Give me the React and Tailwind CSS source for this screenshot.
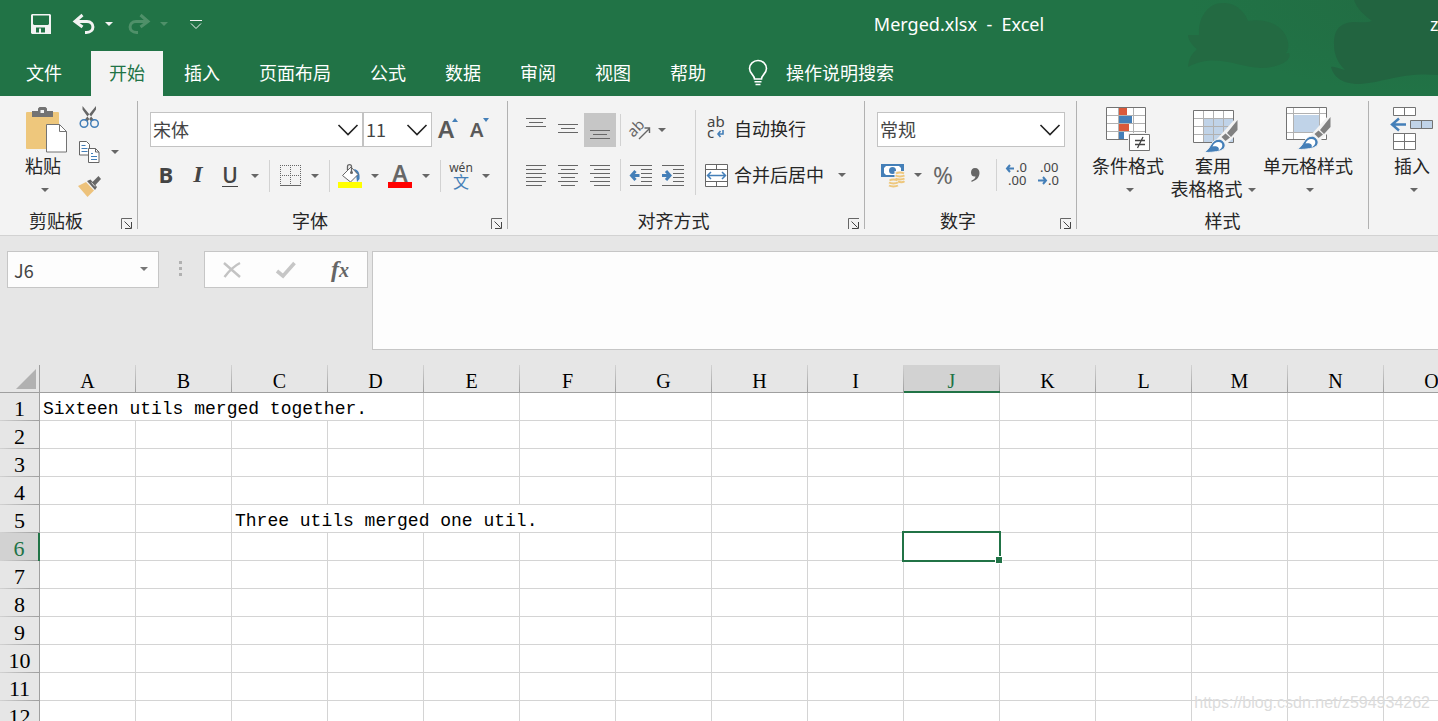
import React, { useState } from 'react';

const TABS = ['插入', '页面布局', '公式', '数据', '审阅', '视图', '帮助'];
const COLUMNS = 'ABCDEFGHIJKLMNO'.split('');
const ROWS = Array.from({ length: 12 }, (_, i) => i + 1);

// merged ranges, keyed by their first cell
const MERGED = {
  A1: { span: 4, text: 'Sixteen utils merged together.' },
  C5: { span: 4, text: 'Three utils merged one util.' },
};

const Svg = ({ w, h, className = '', children }) => (
  <svg width={w} height={h} viewBox={`0 0 ${w} ${h}`} fill="none" className={`shrink-0 overflow-visible ${className}`} aria-hidden="true">
    {children}
  </svg>
);

const Caret = ({ className = 'text-[#666666]' }) => (
  <Svg w={8} h={4} className={className}>
    <path d="M0 0h8L4 4z" fill="currentColor" />
  </Svg>
);

const CaretButton = ({ label, className = '' }) => (
  <button type="button" aria-label={label} className={`flex h-8 w-[10px] shrink-0 items-center justify-center ${className}`}>
    <Caret />
  </button>
);

const IconButton = ({ label, className = 'h-8 w-8', children }) => (
  <button type="button" aria-label={label} className={`flex shrink-0 items-center justify-center ${className}`}>
    {children}
  </button>
);

const Divider = ({ className = '' }) => <div className={`h-8 w-px shrink-0 bg-[#d2d2d2] ${className}`} />;

const Launcher = () => (
  <Svg w={11} h={11}>
    <path d="M.5 11V.5H11" stroke="#666" />
    <path d="M3.5 3.5l6 6M10.5 4v6.500H4" stroke="#444" />
  </Svg>
);

function Group({ label, launcher = true, className = '', children }) {
  return (
    <>
      <section aria-label={label} className={`flex shrink-0 flex-col ${className}`}>
        <div className="h-[113px]">{children}</div>
        <div className="flex h-6 items-center">
          <span className="flex-1 text-center">{label}</span>
          {launcher && (
            <IconButton label={`${label}设置`} className="h-6 w-[25px] pt-1 pl-[3px]">
              <Launcher />
            </IconButton>
          )}
        </div>
      </section>
      <div className="mt-[5px] mb-[6px] w-px shrink-0 bg-[#b1b1b1]" />
    </>
  );
}

function Select({ label, value, className = '' }) {
  return (
    <div className={`relative h-[35px] ${className}`}>
      <select
        aria-label={label}
        defaultValue={value}
        className="h-full w-full appearance-none border border-[#c3c3c3] bg-white pb-[2px] pl-[2px] font-['Noto_Sans_CJK_SC'] text-[#444444] outline-none"
      >
        <option>{value}</option>
      </select>
      <Svg w={22} h={12} className="pointer-events-none absolute top-3 right-1">
        <path d="M1.500 1l9.500 9.500L20.500 1" stroke="#222" strokeWidth="1.600" />
      </Svg>
    </div>
  );
}

const SaveIcon = () => (
  <Svg w={20} h={20}>
    <path fillRule="evenodd" clipRule="evenodd" fill="#f3f3f3" d="M1 0h18l1 1v19H1L0 19V1zM2 1.500v8.500l1 1h14l1-1V1.500zM5 13.500V18.500h3v-4h2v4h4v-5z" />
  </Svg>
);

const UndoIcon = ({ className = '' }) => (
  <Svg w={22} h={20} className={className}>
    <path d="M9.500 1L2 7.500l7.500 5.500M2.500 7.500H14c8 0 8 11-.5 11h-1.500" stroke="currentColor" strokeWidth="3" />
  </Svg>
);

const CustomizeIcon = () => (
  <Svg w={12} h={9}>
    <path d="M0 .5h12M1 3.500l5 5 5-5" stroke="#f3f3f3" />
  </Svg>
);

const BulbIcon = () => (
  <Svg w={20} h={26}>
    <path d="M6.500 19c0-4-5-5.500-5-10.500a8.500 8 0 0117 0c0 5-5 6.500-5 10.500z" stroke="#fff" strokeWidth="1.600" />
    <path d="M6.500 21.800h7M7.500 24.500h5" stroke="#fff" strokeWidth="1.600" />
  </Svg>
);

const PasteIcon = () => (
  <Svg w={43} h={46}>
    <rect x="1" y="5" width="33" height="37" rx="1" fill="#eec77c" />
    <path d="M7 10V4h6V1.500L14.500 0h6L22 1.500V4h6v6z" fill="#737373" />
    <rect x="15.500" y="3" width="3.500" height="3" fill="#f3f3f3" />
    <path d="M21.500 17.500h13l7 7V45h-20z" fill="#fff" stroke="#737373" />
    <path d="M34.500 17.500v7h7" stroke="#737373" />
  </Svg>
);

const CutIcon = () => (
  <Svg w={21} h={22}>
    <path d="M3.500 0l11.500 14-3 1.500L3.500 3.500zM17 0L5.500 14l3 1.500L17 3.500z" fill="#666" />
    <circle cx="5" cy="17.500" r="3.800" stroke="#447fb8" strokeWidth="1.500" />
    <circle cx="15.500" cy="17.500" r="3.800" stroke="#447fb8" strokeWidth="1.500" />
  </Svg>
);

const CopyIcon = () => (
  <Svg w={21} h={22}>
    <path d="M.5.5h7l3 3v10.500H.5z" fill="#fff" stroke="#666" />
    <path d="M2.500 4.500h4M2.500 7.500h6M2.500 10.500h6" stroke="#447fb8" />
    <path d="M9.500 7.500h7l3.500 3.500v10.500H9.500z" fill="#fff" stroke="#666" />
    <path d="M16.500 7.500V11H20" stroke="#666" />
    <path d="M12 12.500h2M12 15.500h6M12 18.500h6" stroke="#447fb8" />
  </Svg>
);

const BrushIcon = () => (
  <Svg w={23} h={21}>
    <path d="M8 6l8 8.500L9.500 21 0 10z" fill="#edc27b" />
    <path d="M9 5l3.500-1.500 6.500 7.500-2 3z" fill="#666" />
    <path d="M14 6.500L20.500 0l2.500 3-6 6.500z" fill="#666" />
    <path d="M13.500 6.500l3.500 4" stroke="#f3f3f3" strokeWidth=".8" />
  </Svg>
);

const BorderIcon = () => (
  <Svg w={21} h={22}>
    <path d="M0 .5h21M0 10.500h21M.5 0v20M10.500 0v20M20.500 0v20" stroke="#666" strokeDasharray="1 1" />
    <path d="M0 20.500h21" stroke="#666" />
  </Svg>
);

const FillIcon = () => (
  <Svg w={24} h={24}>
    <path d="M16 5c5 1 6 5 5.500 10l-2.500 3-1-8z" fill="#447fb8" />
    <path d="M4.500 11.500L13 3l7 7.500-7.500 7.500z" fill="#fff" stroke="#666" />
    <path d="M9.500 6V2.500c0-2.500 4-2.500 4 0V9" stroke="#666" strokeWidth="1.300" />
    <circle cx="13.500" cy="8.500" r="1.500" fill="#666" />
    <path d="M0 18h24v6H0z" fill="#ffff00" />
  </Svg>
);

// three-line vertical alignment icons; y is the first line
const VAlignIcon = ({ y }) => (
  <Svg w={20} h={34}>
    <path d={`M0 ${y}.5h20M3 ${y + 4}.5h14M0 ${y + 8}.5h20`} stroke="#666" />
  </Svg>
);

const ALIGN_PATHS = {
  left: 'M0 .5h20M0 4.500h16M0 8.500h20M0 12.500h16M0 16.500h20M0 20.500h16',
  center: 'M0 .5h20M3 4.500h14M0 8.500h20M3 12.500h14M0 16.500h20M3 20.500h14',
  right: 'M0 .5h20M4 4.500h16M0 8.500h20M4 12.500h16M0 16.500h20M4 20.500h16',
};

const AlignIcon = ({ kind }) => (
  <Svg w={20} h={21}>
    <path d={ALIGN_PATHS[kind]} stroke="#666" />
  </Svg>
);

const IndentIcon = ({ out }) => (
  <Svg w={22} h={21}>
    <path d="M0 .5h22M11 4.500h11M11 8.500h11M11 12.500h11M11 16.500h11M0 20.500h22" stroke="#666" />
    <path d={out ? 'M5.500 6L1.500 10.500l4 4.500M1.500 10.500h8' : 'M4 6l4 4.500-4 4.500M8 10.500H0'} stroke="#447fb8" strokeWidth="3" />
  </Svg>
);

const OrientationIcon = () => (
  <Svg w={22} h={20}>
    <text x="-1" y="14" transform="rotate(-45 6 11)" fontSize="15" fontFamily="Noto Sans" fill="#666">ab</text>
    <path d="M9 19L19.500 8.500M14.500 8h5v5" stroke="#666" strokeWidth="1.400" />
  </Svg>
);

const WrapIcon = () => (
  <Svg w={18} h={22}>
    <text x="0" y="9" fontSize="15" fontFamily="Noto Sans" fill="#444">ab</text>
    <text x="0" y="20" fontSize="15" fontFamily="Noto Sans" fill="#444">c</text>
    <path d="M16 12v4h-5M13.500 13L11 16l2.500 3" stroke="#447fb8" strokeWidth="1.600" />
  </Svg>
);

const MergeIcon = () => (
  <Svg w={23} h={23}>
    <path d="M.5.5h22v22H.5z" fill="#fff" stroke="#666" />
    <path d="M1 5.500h21M1 17.500h21M11.500 1v4M11.500 18v4" stroke="#666" />
    <path d="M2 11.500h19M6 8l-3.500 3.500L6 15M17 8l3.500 3.500L17 15" stroke="#447fb8" strokeWidth="1.500" />
  </Svg>
);

const MoneyIcon = () => (
  <Svg w={24} h={24}>
    <path d="M0 1h23v13H0z" fill="#447fb8" />
    <path d="M5 3h13l2 2v5l-2 2H5l-2-2V5z" fill="#fff" />
    <circle cx="11.500" cy="7.500" r="3.500" fill="#447fb8" />
    <path d="M13.500 8H24v11h-7v5H7v-9h6.500z" fill="#f3f3f3" />
    <g stroke="#eec77c" strokeWidth="2">
      <path d="M15 10.500c2-1.300 6-1.300 8 0M14.500 12.500c2 1.300 7 1.300 9 0M14.500 15.500c2 1.300 7 1.300 9 0M17 18.500c2 .8 5 .8 6.500-.3" />
      <path d="M8.500 17.500c2-1.200 6-1.200 8 0M8 19.500c2 1.300 7 1.300 9 0M8 22.500c2 1.300 7 1.300 9 0" />
    </g>
  </Svg>
);

const DecimalIcon = ({ more }) => (
  <Svg w={24} h={24}>
    <g fontFamily="Noto Sans" fontSize="13" fill="#444">
      <text x={more ? 11 : 3} y="9">{more ? '.0' : '.00'}</text>
      <text x={more ? 3 : 11} y="22">{more ? '.00' : '.0'}</text>
    </g>
    <path d={more ? 'M5 2L2 5.500 5 9M2 5.500h7' : 'M6 14l3 3.500L6 21M9 17.500H1'} stroke="#447fb8" strokeWidth="2" />
  </Svg>
);

// paint brush lying over the bottom right corner of a grid icon
const BrushOverlay = () => (
  <>
    <path d="M24 29L42 9h3v14L31 37z" fill="#f3f3f3" />
    <path d="M44.500 10v10L38 27l-4-4z" fill="#808080" />
    <path d="M32.500 23.500l4.500 4-4.500 3.500-4-4z" fill="#808080" />
    <path d="M10 42.500c6-2 6-6 10-10.500 3-3 7-4 10-1s3 7-1 9-11 2.500-19 2.500z" fill="#447fb8" stroke="#f3f3f3" />
    <path d="M19.500 36.500c1-4 6-6 9-3.500 2 3 0 6-3 7.500 1-2 0-5-6-4z" fill="#fff" />
  </>
);

const ConditionalIcon = () => (
  <Svg w={44} h={45}>
    <path d="M.5.5h39v32H.5z" fill="#fff" />
    <path d="M1 8.500h38M1 16.500h38M1 24.500h38M12.500 1v31M27.500 1v31" stroke="#b1b1b1" />
    <path d="M.5.5h39v32H.5z" stroke="#737373" />
    <path d="M13 1h8v7h-8zM13 17h10v7H13z" fill="#d9593a" />
    <path d="M13 9h13v7H13zM13 25h5v7h-5z" fill="#447fb8" />
    <path d="M22 26h22v19H22z" fill="#f3f3f3" />
    <path d="M23.500 27.500h20v16h-20z" fill="#fff" stroke="#737373" />
    <path d="M29 33.500h10M29 37.500h10M37 30l-5.500 11" stroke="#444" strokeWidth="1.300" />
  </Svg>
);

const TableFormatIcon = () => (
  <Svg w={44} h={45} className="mt-[3px] ml-1">
    <path d="M.5.5h40v32H.5z" fill="#fff" />
    <path d="M11 9h29v23H11z" fill="#c0d3e8" />
    <path d="M1 8.500h39M1 16.500h39M1 24.500h39M10.500 1v31M20.500 1v31M30.500 1v31" stroke="#b1b1b1" />
    <path d="M.5.5h40v32H.5z" stroke="#737373" />
    <BrushOverlay />
  </Svg>
);

const CellStyleIcon = () => (
  <Svg w={44} h={45}>
    <path d="M.5.5h40v32H.5z" fill="#fff" />
    <path d="M1 6.500h39M1 25.500h39M7.500 1v31M33.500 1v31" stroke="#b1b1b1" />
    <path d="M8 8h25v17H8z" fill="#c0d3e8" />
    <path d="M.5.5h40v32H.5z" stroke="#737373" />
    <BrushOverlay />
  </Svg>
);

const InsertIcon = () => (
  <Svg w={44} h={45}>
    <path d="M3.500.5h22v8h-22zM3.500 26.500h22v16h-22z" fill="#fff" stroke="#737373" />
    <path d="M14.500 1v7M14.500 27v15M4 34.500h21" stroke="#737373" />
    <path d="M20.500 13.500h22v8h-22z" fill="#c0d3e8" stroke="#737373" />
    <path d="M31.500 14v7" stroke="#737373" />
    <path d="M9 11.500L2 17.500l7 6M2 17.500h14" stroke="#447fb8" strokeWidth="2.400" />
  </Svg>
);

function BigButton({ icon, lines, className = '' }) {
  const last = lines.length - 1;
  return (
    <button type="button" className={`flex shrink-0 flex-col items-center pt-[11px] leading-[23px] ${className}`}>
      <span className="h-12">{icon}</span>
      {lines.map((line, i) => (
        <span key={line} className="flex items-center gap-[5px] whitespace-nowrap">
          {line}
          {i === last && last > 0 && <Caret />}
        </span>
      ))}
      {last === 0 && <span className="flex h-6 items-center pl-1"><Caret /></span>}
    </button>
  );
}

function TitleBar() {
  return (
    <header className="relative bg-[#217346] text-white">
      {/* office background art */}
      <svg width="290" height="96" viewBox="0 0 290 96" className="absolute top-0 right-0" aria-hidden="true">
        <defs>
          <radialGradient id="haze">
            <stop offset="0" stopColor="#22643f" stopOpacity=".5" />
            <stop offset="1" stopColor="#22643f" stopOpacity="0" />
          </radialGradient>
        </defs>
        <ellipse cx="290" cy="0" rx="250" ry="95" fill="url(#haze)" />
        <path d="M51 35C50 15 62 2 76 3c13 0 22 11 24 18 14-3 32 2 38 15 6 14 0 20-12 23h-14c12 0 20-5 29-6 4 9-14 15-28 15-22 0-45-16-73-1 1-9 3-12 9-18-3-2-9-8-9-14z" fill="#236a42" />
        <path d="M206 0h84v75c-36-3-56 8-79 9-19 0-26-9-28-17 4-1 8 2 14 3-8-8-11-16-11-26 0-15 6-21 20-22 6 0 14 1 18-1-8-6-15-12-18-21z" fill="#226440" />
      </svg>
      <div className="relative flex h-[51px] items-center overflow-hidden pb-[3px]">
        <div className="flex w-[488px] items-center pl-[31px]">
          <button type="button" aria-label="保存"><SaveIcon /></button>
          <button type="button" aria-label="撤消" className="ml-[22px]"><UndoIcon className="text-[#f3f3f3]" /></button>
          <button type="button" aria-label="撤消选项" className="ml-[10px]"><Caret className="text-[#f3f3f3]" /></button>
          <button type="button" aria-label="恢复" className="ml-[15px]"><UndoIcon className="-scale-x-100 text-[#4f9069]" /></button>
          <button type="button" aria-label="恢复选项" className="ml-[10px]"><Caret className="text-[#4f9069]" /></button>
          <button type="button" aria-label="自定义快速访问工具栏" className="ml-[22px]"><CustomizeIcon /></button>
        </div>
        <h1 className="flex-1 text-center whitespace-pre">Merged.xlsx  -  Excel</h1>
        <span className="w-[8px] shrink-0">z</span>
      </div>
      <nav className="relative flex h-[45px] items-stretch gap-[3px] pl-2" aria-label="功能区">
        <button type="button" className="mr-2 px-[18px] pb-[2px]">文件</button>
        <button type="button" className="bg-[#f3f3f3] px-[18px] pb-[2px] text-[#217346]">开始</button>
        {TABS.map((tab) => (
          <button key={tab} type="button" className="px-[18px] pb-[2px]">{tab}</button>
        ))}
        <button type="button" className="ml-[21px] flex items-center gap-[18px] pb-[2px]">
          <BulbIcon />
          操作说明搜索
        </button>
      </nav>
    </header>
  );
}

function Ribbon() {
  return (
    <div className="flex h-[140px] overflow-hidden border-b border-[#d2d2d2] bg-[#f3f3f3] text-[#262626]">
      <Group label="剪贴板" className="w-[137px]">
        <div className="flex">
          <button type="button" className="ml-[25px] flex w-12 flex-col items-start pt-[11px] leading-[23px]">
            <span className="h-12"><PasteIcon /></span>
            <span>粘贴</span>
            <span className="flex h-6 items-center pl-4"><Caret /></span>
          </button>
          <div className="flex flex-col pt-1">
            <IconButton label="剪切" className="h-[34px] w-8"><CutIcon /></IconButton>
            <div className="flex items-center">
              <IconButton label="复制" className="h-[35px] w-8"><CopyIcon /></IconButton>
              <CaretButton label="复制选项" className="ml-[5px]" />
            </div>
            <IconButton label="格式刷" className="h-[35px] w-8"><BrushIcon /></IconButton>
          </div>
        </div>
      </Group>

      <Group label="字体" className="w-[369px]">
        <div className="flex h-[51px] pt-4 pl-3">
          <Select label="字体名称" value="宋体" className="w-[213px]" />
          <Select label="字号" value="11" className="w-[69px]" />
          <button type="button" aria-label="增大字号" className="ml-[6px] flex w-8 items-start font-['Noto_Sans'] text-2xl leading-[33px] font-semibold text-[#595959]">
            A
            <Svg w={6} h={4} className="mt-[6px] -ml-[2px]"><path d="M3 0l3 4H0z" fill="#447fb8" /></Svg>
          </button>
          <button type="button" aria-label="减小字号" className="flex items-start font-['Noto_Sans'] text-xl leading-[35px] font-semibold text-[#595959]">
            A
            <Svg w={6} h={4} className="mt-[6px]"><path d="M0 0h6L3 4z" fill="#447fb8" /></Svg>
          </button>
        </div>
        <div className="mt-[13px] flex h-8 pl-3 text-[#444444]">
          <IconButton label="加粗"><b className="pb-1 font-['Open_Sans'] text-[22px] leading-7">B</b></IconButton>
          <IconButton label="倾斜"><i className="pb-1 font-['Liberation_Serif'] text-2xl leading-7 font-bold">I</i></IconButton>
          <IconButton label="下划线">
            <span className="border-b border-[#444444] font-['Open_Sans'] text-[21px] leading-[21px] font-semibold">U</span>
          </IconButton>
          <CaretButton label="下划线选项" className="ml-1" />
          <Divider className="ml-[9px]" />
          <IconButton label="边框" className="h-8 w-10"><BorderIcon /></IconButton>
          <CaretButton label="边框选项" />
          <Divider className="ml-[9px]" />
          <IconButton label="填充颜色" className="h-8 w-10"><FillIcon /></IconButton>
          <CaretButton label="填充选项" />
          <IconButton label="字体颜色" className="h-8 w-10">
            <span className="h-6 w-6 border-b-[6px] border-[#ff0000] text-center font-['Noto_Sans'] text-[23px] leading-[18px] font-semibold text-[#666666]">A</span>
          </IconButton>
          <CaretButton label="字体颜色选项" className="ml-px" />
          <Divider className="ml-[9px]" />
          <IconButton label="拼音" className="h-8 w-10 flex-col">
            <span className="font-['Noto_Sans'] text-xs leading-3">wén</span>
            <span className="text-base leading-4 text-[#447fb8]">文</span>
          </IconButton>
          <CaretButton label="拼音选项" />
        </div>
      </Group>

      <Group label="对齐方式" className="w-[356px]">
        <div className="flex">
          <div className="w-[187px] pt-4 pl-3">
            <div className="flex h-[35px] items-center">
              <IconButton label="顶端对齐" className="h-[34px] w-8"><VAlignIcon y={5} /></IconButton>
              <IconButton label="垂直居中" className="h-[34px] w-8"><VAlignIcon y={11} /></IconButton>
              <IconButton label="底端对齐" className="h-[34px] w-8 bg-[#c6c6c6]"><VAlignIcon y={17} /></IconButton>
              <Divider className="ml-1" />
              <IconButton label="方向" className="ml-1 h-8 w-8"><OrientationIcon /></IconButton>
              <CaretButton label="方向选项" />
            </div>
            <div className="mt-3 flex h-8">
              <IconButton label="左对齐"><AlignIcon kind="left" /></IconButton>
              <IconButton label="居中"><AlignIcon kind="center" /></IconButton>
              <IconButton label="右对齐"><AlignIcon kind="right" /></IconButton>
              <Divider className="ml-1" />
              <IconButton label="减少缩进量" className="ml-1 h-8 w-8"><IndentIcon out /></IconButton>
              <IconButton label="增加缩进量"><IndentIcon /></IconButton>
            </div>
          </div>
          <div className="mt-[14px] h-[85px] w-px bg-[#d2d2d2]" />
          <div className="pt-4 pl-2">
            <button type="button" className="flex h-[34px] items-center gap-[6px]">
              <span className="flex w-6 justify-center"><WrapIcon /></span>
              自动换行
            </button>
            <div className="mt-[13px] flex h-8">
              <button type="button" className="flex items-center gap-[6px]">
                <span className="flex w-6 justify-center"><MergeIcon /></span>
                合并后居中
              </button>
              <CaretButton label="合并选项" className="ml-[13px]" />
            </div>
          </div>
        </div>
      </Group>

      <Group label="数字" className="w-[211px]">
        <div className="pt-4 pl-3">
          <Select label="数字格式" value="常规" className="w-[188px]" />
        </div>
        <div className="mt-3 flex h-8 pl-3 text-[#666666]">
          <IconButton label="会计数字格式"><MoneyIcon /></IconButton>
          <CaretButton label="会计选项" className="ml-1" />
          <button type="button" aria-label="百分比样式" className="ml-1 w-8 font-['Noto_Sans'] text-2xl leading-8">%</button>
          <IconButton label="千位分隔样式">
            <Svg w={10} h={14}><path d="M5 0c3 0 4.500 2 4.500 5 0 4.500-3.500 7.500-8 9v-1.500c2.500-1 4-2.500 4-4C2.500 9 1 7 1 4.500 1 2 2.500 0 5 0z" fill="#666" /></Svg>
          </IconButton>
          <Divider className="ml-[5px]" />
          <IconButton label="增加小数位数" className="ml-1 h-8 w-8"><DecimalIcon more /></IconButton>
          <IconButton label="减少小数位数"><DecimalIcon /></IconButton>
        </div>
      </Group>

      <Group label="样式" launcher={false} className="w-[291px]">
        <div className="flex pl-[11px]">
          <BigButton icon={<ConditionalIcon />} lines={['条件格式']} className="w-20" />
          <BigButton icon={<TableFormatIcon />} lines={['套用', '表格格式']} className="w-[90px]" />
          <BigButton icon={<CellStyleIcon />} lines={['单元格样式']} className="w-[100px]" />
        </div>
      </Group>

      <BigButton icon={<InsertIcon />} lines={['插入']} className="w-[86px]" />
    </div>
  );
}

function FormulaBar() {
  const [formula, setFormula] = useState('');
  return (
    <div className="flex items-start bg-[#e6e6e6] pt-[15px] pb-[15px] pl-[7px]">
      <div className="relative w-[152px] shrink-0">
        <input
          aria-label="名称框"
          defaultValue="J6"
          className="h-[37px] w-full border border-[#c6c6c6] bg-[#fdfdfd] pl-[6px] font-['Noto_Sans_CJK_SC'] text-[#444444] outline-none"
        />
        <Caret className="pointer-events-none absolute top-4 right-[11px] text-[#777777]" />
      </div>
      <Svg w={3} h={15} className="mt-[10px] ml-5">
        <path d="M0 0h3v3H0zM0 6h3v3H0zM0 12h3v3H0z" fill="#b1b1b1" />
      </Svg>
      <div className="ml-[22px] flex h-[37px] w-[164px] shrink-0 items-center justify-around border border-[#c6c6c6] bg-[#fdfdfd]">
        <IconButton label="取消">
          <Svg w={18} h={16}><path d="M1 1l16 14M17 1C11 4 6 9 1.500 15" stroke="#c3c3c3" strokeWidth="2.400" /></Svg>
        </IconButton>
        <IconButton label="输入">
          <Svg w={20} h={16}><path d="M1 9l6 5L18.500 1" stroke="#c6c6c6" strokeWidth="3.600" /></Svg>
        </IconButton>
        <button type="button" aria-label="插入函数" className="w-8 pb-px font-['Liberation_Serif'] text-2xl leading-6 font-bold text-[#666666] italic">
          f<span className="text-xl leading-6">x</span>
        </button>
      </div>
      <textarea
        aria-label="编辑栏"
        value={formula}
        onChange={(e) => setFormula(e.target.value)}
        className="ml-1 block h-[99px] min-w-0 flex-1 resize-none border border-r-0 border-[#c6c6c6] bg-[#fdfdfd] p-1 outline-none"
      />
    </div>
  );
}

function Cell({ col, row }) {
  const merged = MERGED[`${col}${row}`];
  if (merged) {
    return (
      <td colSpan={merged.span} className="border-r border-b border-[#d4d4d4] pt-[5px] pl-[3px] font-['Liberation_Mono'] text-lg leading-[22px] whitespace-pre">
        {merged.text}
      </td>
    );
  }
  if (col === 'J' && row === 6) {
    return (
      <td className="relative border-r border-b border-[#d4d4d4]">
        <div className="absolute -top-[2px] -right-[2px] -bottom-[2px] -left-[2px] border-2 border-[#217346]" />
        <div className="absolute -right-[4px] -bottom-[4px] h-[8px] w-[8px] border border-white bg-[#217346]" />
      </td>
    );
  }
  return <td className="border-r border-b border-[#d4d4d4]" />;
}

// columns hidden under a merged range in the given row
const isCovered = (index, row) =>
  Object.keys(MERGED).some((key) => {
    const start = COLUMNS.indexOf(key[0]);
    return Number(key.slice(1)) === row && index > start && index < start + MERGED[key].span;
  });

function Sheet() {
  return (
    <div className="overflow-hidden">
      <table className="w-[1480px] table-fixed border-separate border-spacing-0 bg-white">
        <thead>
          <tr className="h-7 bg-[#e6e6e6]">
            <th className="w-10 border-r border-b border-[#9f9f9f] p-0">
              <Svg w={20} h={20} className="ml-4"><path d="M20 0v20H0z" fill="#b1b1b1" /></Svg>
            </th>
            {COLUMNS.map((col) => (
              <th
                key={col}
                scope="col"
                className={`w-24 p-0 font-['Liberation_Serif'] text-xl leading-[22px] font-normal ${
                  col === 'J' ? 'border-b-2 border-[#217346] bg-[#d2d2d2] text-[#217346]' : 'border-b border-[#9f9f9f] text-black'
                }`}
              >
                <div className={`flex items-start ${col === 'J' ? 'h-[26px]' : 'h-[27px]'}`}>
                  <span className="flex-1 pt-[5px]">{col}</span>
                  <span className="w-px self-stretch bg-linear-to-b from-[#d2d2d2] to-[#9f9f9f]" />
                </div>
              </th>
            ))}
          </tr>
        </thead>
        <tbody>
          {ROWS.map((row) => (
            <tr key={row} className="h-7">
              <th
                scope="row"
                className={`h-7 p-0 font-['Liberation_Serif'] text-[22px] leading-[22px] font-normal ${
                  row === 6 ? 'border-r-2 border-[#217346] bg-[#d2d2d2] text-[#217346]' : 'border-r border-[#9f9f9f] bg-[#e6e6e6] text-black'
                }`}
              >
                <div className="pt-[5px]">{row}</div>
                <div className="h-px bg-linear-to-r from-[#d2d2d2] to-[#9f9f9f]" />
              </th>
              {COLUMNS.map((col, i) => (isCovered(i, row) ? null : <Cell key={col} col={col} row={row} />))}
            </tr>
          ))}
        </tbody>
      </table>
    </div>
  );
}

export default function App() {
  return (
    <div className="relative h-screen overflow-hidden bg-white font-['Noto_Sans','Noto_Sans_CJK_SC',sans-serif] text-lg leading-6">
      <TitleBar />
      <Ribbon />
      <FormulaBar />
      <Sheet />
      <a
        href="https://blog.csdn.net/z594934262"
        className="absolute right-2 bottom-[6px] font-['Liberation_Sans'] text-base leading-6 text-[#dcdcdc]"
      >
        https://blog.csdn.net/z594934262
      </a>
    </div>
  );
}
